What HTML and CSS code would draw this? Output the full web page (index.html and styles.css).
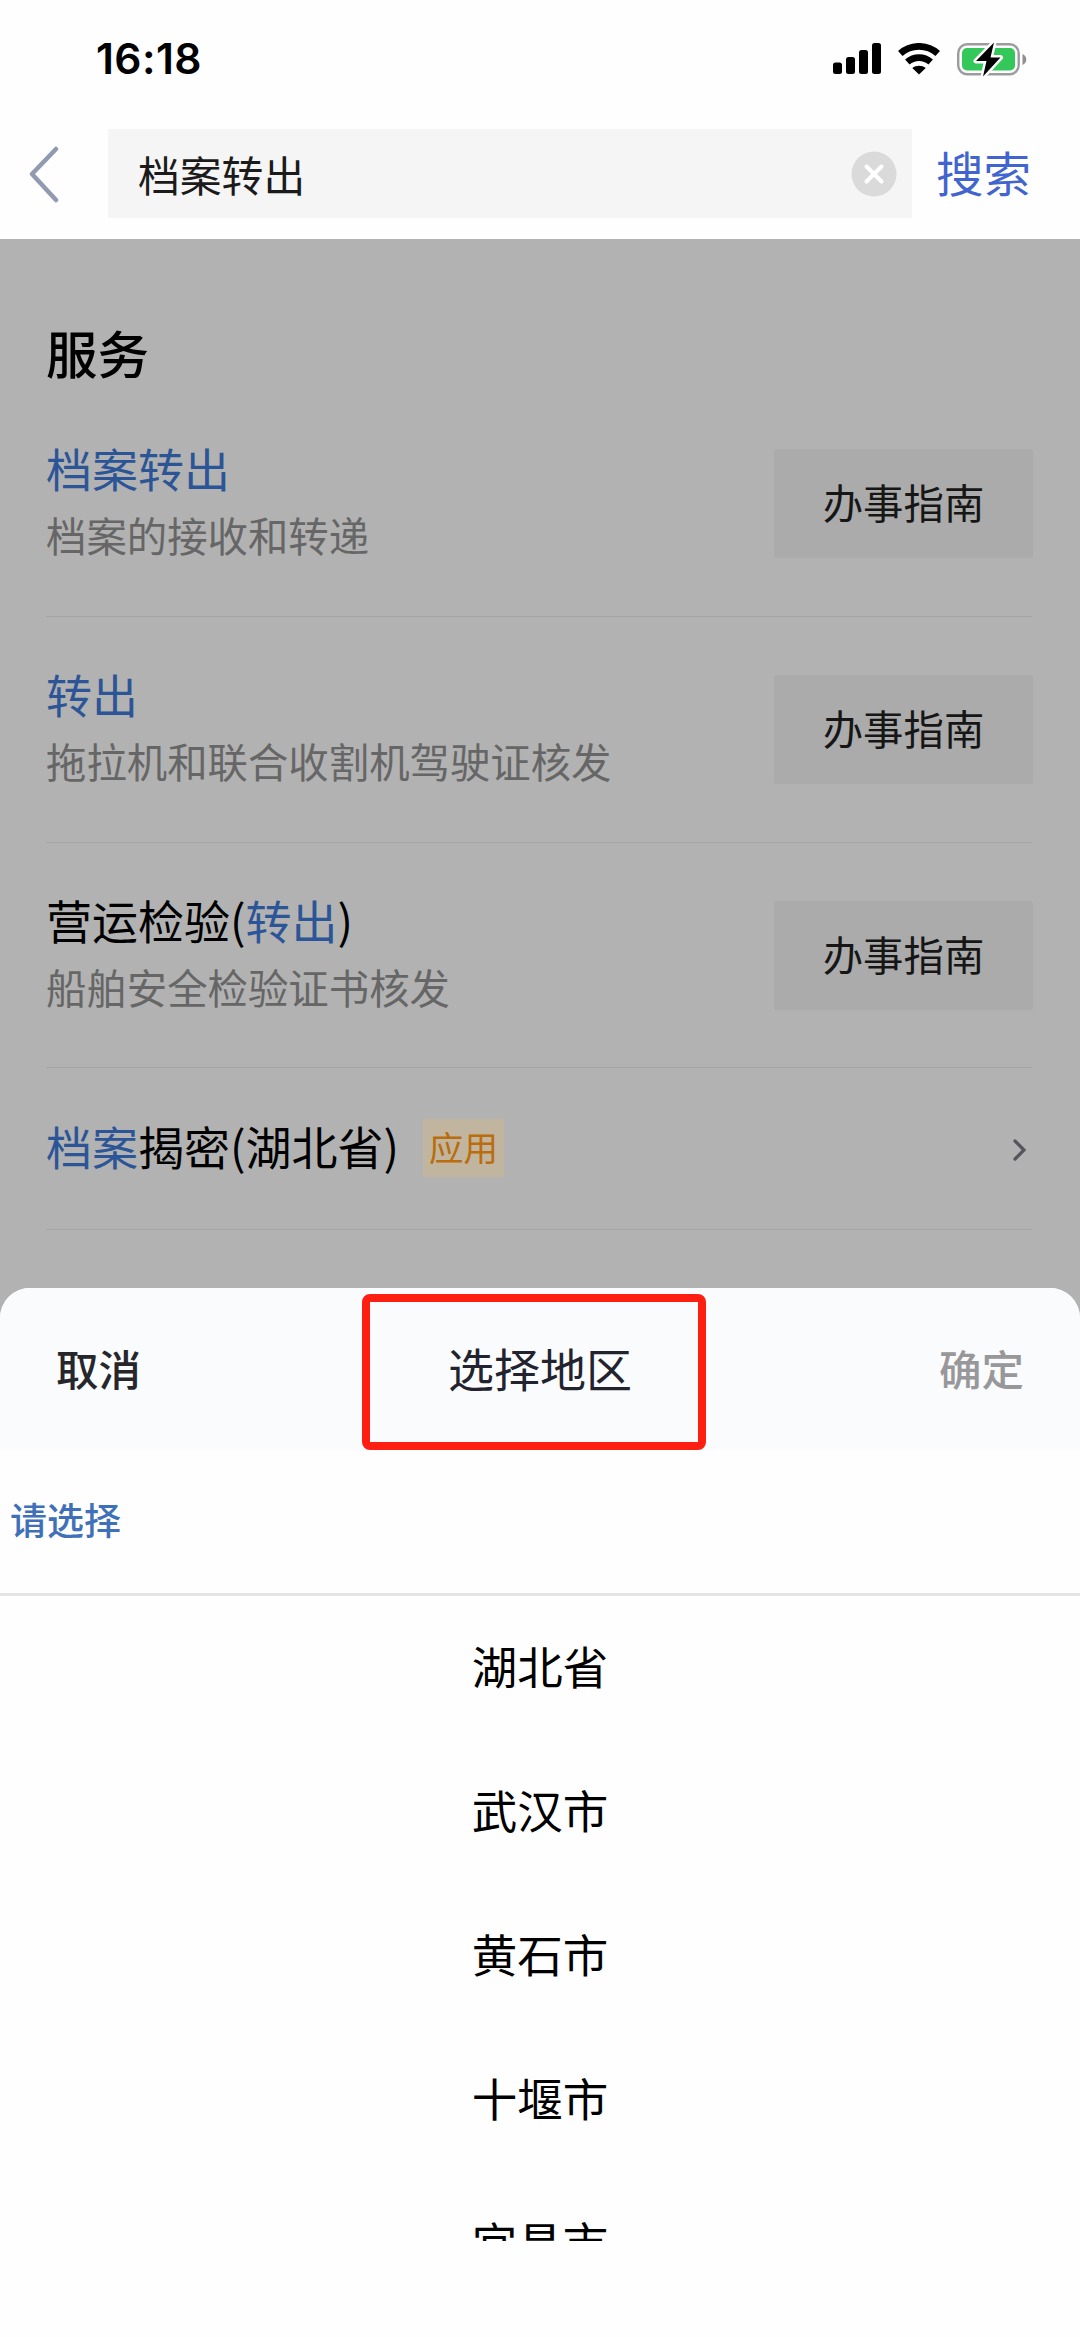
FILE: index.html
```html
<!DOCTYPE html>
<html lang="zh-CN">
<head>
<meta charset="utf-8">
<title>档案转出</title>
<link rel="stylesheet" href="styles.css">
</head>
<body>
<div class="screen">
  <header class="status">
    <span class="time">16:18</span>
    <div class="status-icons">
      <svg class="signal" width="48" height="32" viewBox="0 0 48 32"><rect x="0" y="19.500" width="9" height="11.500" rx="2.500"/><rect x="13" y="14" width="9" height="17" rx="2.500"/><rect x="26" y="7" width="9" height="24" rx="2.500"/><rect x="39" y="0" width="9" height="31" rx="2.500"/></svg>
      <svg class="wifi" width="42" height="32" viewBox="0 0 42 32"><g fill="none" stroke="#000" stroke-width="6.800"><path d="M2.300 10.500C13 1 29 1 39.700 10.500"/><path d="M9.300 19C16 13.200 26 13.200 32.700 19"/></g><path d="M21 31.500L14.300 25C18 22 24 22 27.700 25Z"/></svg>
      <svg class="battery" width="70" height="36" viewBox="0 0 70 36"><rect x="1.200" y="3.200" width="60.500" height="30" rx="9" fill="none" stroke="#9c9c9e" stroke-width="2.400"/><rect x="5" y="7" width="53" height="22.500" rx="5" fill="#34c759"/><path d="M65.500 13c5 2 5 9 0 11z" fill="#8f8f92"/><path d="M37 1.500L19 20h10.500L26 35.500 43.500 16.500H33.500Z" fill="#000" stroke="#fff" stroke-width="5" stroke-linejoin="round" paint-order="stroke"/></svg>
    </div>
  </header>
  <div class="searchbar">
    <svg class="back" width="32" height="58" viewBox="0 0 32 58"><path d="M28 4L4 29 28 55" fill="none" stroke="#929ab2" stroke-width="4.500" stroke-linecap="round" stroke-linejoin="round"/></svg>
    <div class="field">
      <span>档案转出</span>
      <svg width="46" height="46" viewBox="0 0 46 46"><circle cx="23" cy="23" r="22.500" fill="#dadada"/><path d="M15.500 15.500l15 15m0-15l-15 15" stroke="#fff" stroke-width="4" stroke-linecap="round"/></svg>
    </div>
    <span class="search">搜索</span>
  </div>
  <main class="results">
    <h1 class="heading">服务</h1>
    <div class="row">
      <div class="info"><div class="title"><b>档案转出</b></div><div class="desc">档案的接收和转递</div></div>
      <div class="guide">办事指南</div>
    </div>
    <div class="row">
      <div class="info"><div class="title"><b>转出</b></div><div class="desc">拖拉机和联合收割机驾驶证核发</div></div>
      <div class="guide">办事指南</div>
    </div>
    <div class="row third">
      <div class="info"><div class="title">营运检验(<b>转出</b>)</div><div class="desc">船舶安全检验证书核发</div></div>
      <div class="guide">办事指南</div>
    </div>
    <div class="row app">
      <div class="title"><b>档案</b>揭密(湖北省)</div>
      <span class="tag">应用</span>
      <svg class="more" width="16" height="24" viewBox="0 0 16 24"><path d="M3 3l9 9-9 9" fill="none" stroke="#55555e" stroke-width="3.200" stroke-linecap="round"/></svg>
    </div>
  </main>
  <section class="sheet">
    <div class="sheet-head">
      <span class="cancel">取消</span>
      <span class="sheet-title">选择地区</span>
      <span class="confirm">确定</span>
      <div class="highlight"></div>
    </div>
    <div class="tabs">请选择</div>
    <div class="options">
      <div class="option">湖北省</div>
      <div class="option">武汉市</div>
      <div class="option">黄石市</div>
      <div class="option">十堰市</div>
      <div class="option">宜昌市</div>
    </div>
  </section>
</div>
</body>
</html>
```
FILE: styles.css
```css
* { box-sizing: border-box; }
body {
  margin: 0;
  background: #fefefe;
  color: #000;
  font-family: "Noto Sans CJK SC", sans-serif;
}
.screen {
  display: flex;
  flex-direction: column;
  height: 2337px;
  overflow: hidden;
}
.status {
  display: flex;
  justify-content: space-between;
  height: 118px;
  padding: 0 53px 0 96px;
}
.time {
  font: 600 42.5px/118px Inter, sans-serif;
  letter-spacing: 0.4px;
}
.status-icons { display: flex; height: 118px; align-items: center; }
.wifi { margin: 0 17px; }
.searchbar {
  display: flex;
  align-items: center;
  height: 121px;
  padding: 0 0 10px 28px;
}
.back { flex: none; margin-right: 48px; }
.field {
  display: flex;
  align-items: center;
  justify-content: space-between;
  width: 804px;
  height: 89px;
  padding: 0 15px 0 30px;
  background: #f5f5f5;
  color: #1b1b1b;
  font-size: 41.8px;
}
.search {
  margin-left: 24px;
  color: #4264cf;
  font-size: 47.5px;
  line-height: 86px;
  padding-bottom: 3px;
}
.results {
  height: 1130px;
  padding: 0 48px 0 46px;
  background: #b2b2b2;
}
.heading {
  height: 152px;
  margin: 0;
  padding-top: 62px;
  font-size: 51.5px;
  font-weight: 500;
  line-height: 101px;
}
.row {
  display: flex;
  justify-content: space-between;
  height: 226px;
  border-bottom: 1px solid #a5a5a5;
}
.row.third { height: 225px; }
.info { padding-top: 43px; }
.title { font-size: 46px; line-height: 67px; white-space: nowrap; }
.title b { color: #2c5597; font-weight: 400; }
.desc {
  color: #666;
  font-size: 40.4px;
  line-height: 67px;
  white-space: nowrap;
}
.guide {
  width: 259px;
  height: 109px;
  margin-top: 58px;
  margin-right: -1px;
  border-radius: 3px;
  background: #ababab;
  color: #161616;
  font-size: 40.4px;
  line-height: 105px;
  text-align: center;
}
.row.app {
  justify-content: flex-start;
  align-items: center;
  height: 162px;
}
.app .title { padding-bottom: 7px; }
.tag {
  width: 81px;
  height: 58px;
  margin: 0 0 2px 24px;
  background: #c2b59f;
  color: #b96d0c;
  font-size: 34.5px;
  line-height: 54px;
  text-align: center;
}
.more { margin: 2px 4px 0 auto; }
.sheet {
  position: absolute;
  top: 1288px;
  left: 0;
  width: 1080px;
  height: 1049px;
  border-radius: 30px 30px 0 0;
  background: #fefefe;
  overflow: hidden;
}
.sheet-head {
  position: relative;
  display: grid;
  grid-template-columns: 1fr auto 1fr;
  height: 162px;
  padding: 0 56px;
  background: #fafbfd;
  font-size: 42.5px;
  line-height: 159px;
}
.cancel { color: #26262b; font-weight: 500; }
.sheet-title { color: #23232f; font-size: 46px; }
.confirm { color: #98989a; font-weight: 500; text-align: right; }
.highlight {
  position: absolute;
  top: 6px;
  left: 362px;
  width: 344px;
  height: 156px;
  border: 8px solid #ff1f12;
  border-radius: 8px;
}
.tabs {
  height: 146px;
  padding-left: 10px;
  border-bottom: 3px solid #e5e5e5;
  color: #3f70b8;
  font-size: 37px;
  font-weight: 500;
  line-height: 138px;
}
.options { height: 645px; overflow: hidden; }
.option {
  height: 144px;
  font-size: 45.5px;
  line-height: 138px;
  text-align: center;
}
```
